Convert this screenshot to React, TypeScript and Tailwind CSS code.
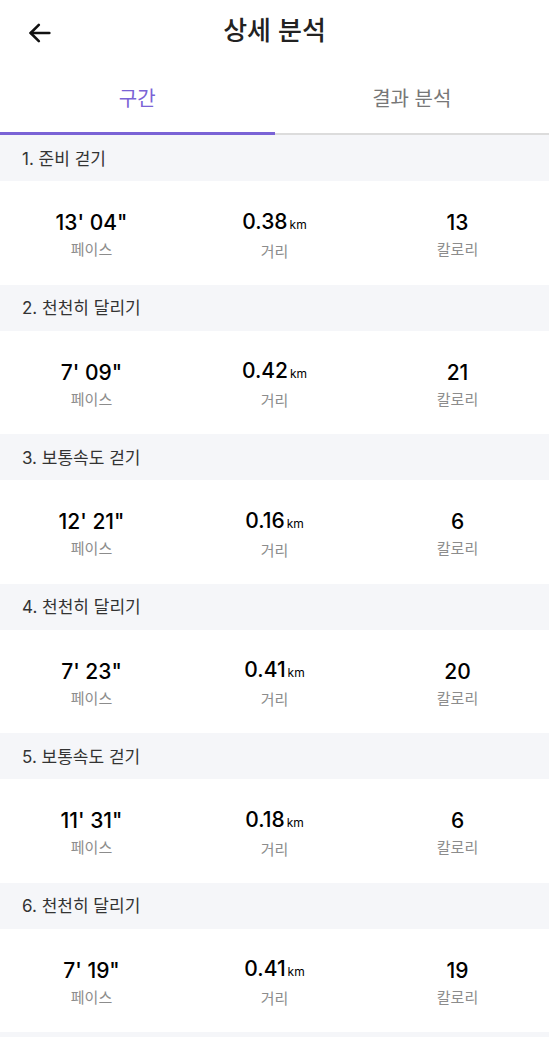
const sections = [
  { title: "1. 준비 걷기", pace: "13' 04\"", dist: "0.38", cal: "13" },
  { title: "2. 천천히 달리기", pace: "7' 09\"", dist: "0.42", cal: "21" },
  { title: "3. 보통속도 걷기", pace: "12' 21\"", dist: "0.16", cal: "6" },
  { title: "4. 천천히 달리기", pace: "7' 23\"", dist: "0.41", cal: "20" },
  { title: "5. 보통속도 걷기", pace: "11' 31\"", dist: "0.18", cal: "6" },
  { title: "6. 천천히 달리기", pace: "7' 19\"", dist: "0.41", cal: "19" },
];

const Stat = ({ value, unit, label }: { value: string; unit?: string; label: string }) => (
  <div className="flex flex-col items-center">
    <div className="flex items-baseline text-[21px] leading-[26px] font-medium text-black">
      {value}
      {unit && <span className="ml-[2px] text-[12px] font-normal">{unit}</span>}
    </div>
    <div className="mt-[3px] text-[15px] leading-[22px] text-[#8c8c8c]">{label}</div>
  </div>
);

export default function App() {
  return (
    <div className="w-[549px] h-[1037px] overflow-hidden bg-white font-['Inter','Noto_Sans_CJK_KR',sans-serif]">
      <header className="relative h-[65px] flex items-center justify-center">
        <button className="absolute left-[26px] top-[19px] p-0">
          <svg width="28" height="28" viewBox="0 0 24 24" fill="none" stroke="#111" strokeWidth="2.2" strokeLinecap="round" strokeLinejoin="round">
            <path d="M20 12H4" />
            <path d="M11 5l-7 7 7 7" />
          </svg>
        </button>
        <h1 className="text-[26px] font-medium text-[#222] -mt-[4px]">상세 분석</h1>
      </header>

      <nav className="flex h-[70px] border-b-2 border-[#dcdcdc]">
        <div className="relative flex-1 flex items-center justify-center text-[20px] text-[#7a63d6]">
          구간
          <div className="absolute left-0 right-0 -bottom-[2px] h-[3px] bg-[#7a63d6]" />
        </div>
        <div className="flex-1 flex items-center justify-center text-[20px] text-[#777]">결과 분석</div>
      </nav>

      {sections.map((s) => (
        <section key={s.title}>
          <div className="h-[46px] bg-[#f5f6f9] flex items-center px-[22px] pt-[3px] text-[17px] text-[#333]">
            {s.title}
          </div>
          <div className="h-[103.5px] grid grid-cols-3 items-center pt-[6px]">
            <Stat value={s.pace} label="페이스" />
            <Stat value={s.dist} unit="km" label="거리" />
            <Stat value={s.cal} label="칼로리" />
          </div>
        </section>
      ))}
      <div className="h-[10px] bg-[#f5f6f9]" />
    </div>
  );
}
